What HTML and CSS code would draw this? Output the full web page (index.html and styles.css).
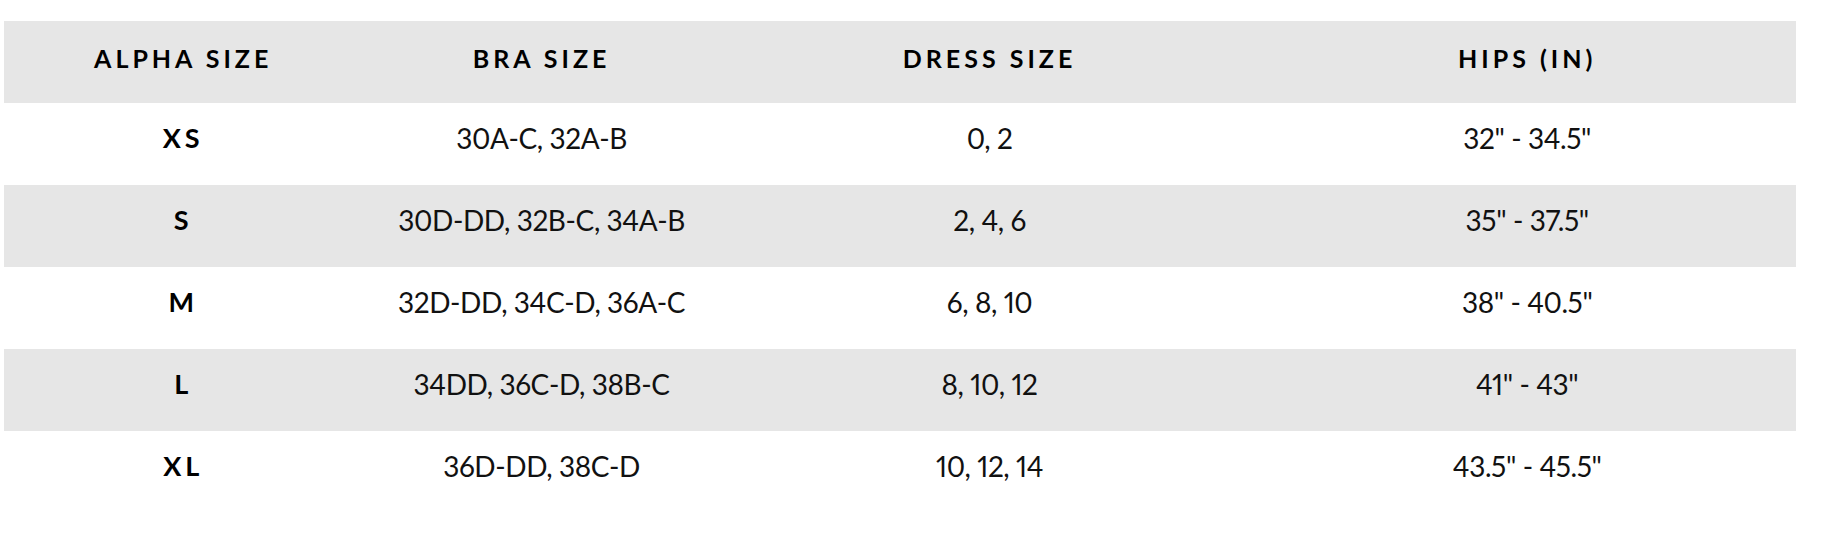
FILE: index.html
```html
<!DOCTYPE html>
<html lang="en">
<head>
<meta charset="utf-8">
<title>Size Chart</title>
<link rel="stylesheet" href="styles.css">
</head>
<body>
<div class="page">
  <table class="size-chart">
    <colgroup>
      <col class="col-narrow"><col class="col-narrow"><col class="col-wide"><col class="col-wide">
    </colgroup>
    <thead>
      <tr class="row shaded">
        <th>ALPHA SIZE</th>
        <th>BRA SIZE</th>
        <th>DRESS SIZE</th>
        <th>HIPS (IN)</th>
      </tr>
    </thead>
    <tbody>
      <tr class="row">
        <td class="alpha">XS</td>
        <td>30A-C, 32A-B</td>
        <td>0, 2</td>
        <td>32" - 34.5"</td>
      </tr>
      <tr class="row shaded">
        <td class="alpha">S</td>
        <td>30D-DD, 32B-C, 34A-B</td>
        <td>2, 4, 6</td>
        <td>35" - 37.5"</td>
      </tr>
      <tr class="row">
        <td class="alpha">M</td>
        <td>32D-DD, 34C-D, 36A-C</td>
        <td>6, 8, 10</td>
        <td>38" - 40.5"</td>
      </tr>
      <tr class="row shaded">
        <td class="alpha">L</td>
        <td>34DD, 36C-D, 38B-C</td>
        <td>8, 10, 12</td>
        <td>41" - 43"</td>
      </tr>
      <tr class="row">
        <td class="alpha">XL</td>
        <td>36D-DD, 38C-D</td>
        <td>10, 12, 14</td>
        <td>43.5" - 45.5"</td>
      </tr>
    </tbody>
  </table>
</div>
</body>
</html>
```

FILE: styles.css
```css
html, body {
  margin: 0;
  padding: 0;
  background: #ffffff;
}

.page {
  padding: 21px 42px 0 4px;
}

.size-chart {
  width: 1792px;
  border-collapse: collapse;
  table-layout: fixed;
  font-family: "Lato", "Liberation Sans", sans-serif;
  color: #111111;
}

.col-narrow { width: 20%; }
.col-wide { width: 30%; }

.row.shaded {
  background: #e6e6e6;
}

.size-chart th,
.size-chart td {
  text-align: center;
  padding: 0;
  height: 82px;
  box-sizing: border-box;
}

.size-chart th {
  font-size: 25px;
  font-weight: 700;
  letter-spacing: 4px;
  line-height: 34px;
  padding: 20px 0 28px;
  color: #000000;
}

.size-chart td {
  font-size: 28px;
  font-weight: 400;
  line-height: 34px;
  padding: 18px 0 30px;
  font-variant-numeric: proportional-nums;
  letter-spacing: -0.4px;
}

.size-chart td.alpha {
  font-size: 27px;
  font-weight: 700;
  letter-spacing: 4px;
  color: #000000;
}
```
